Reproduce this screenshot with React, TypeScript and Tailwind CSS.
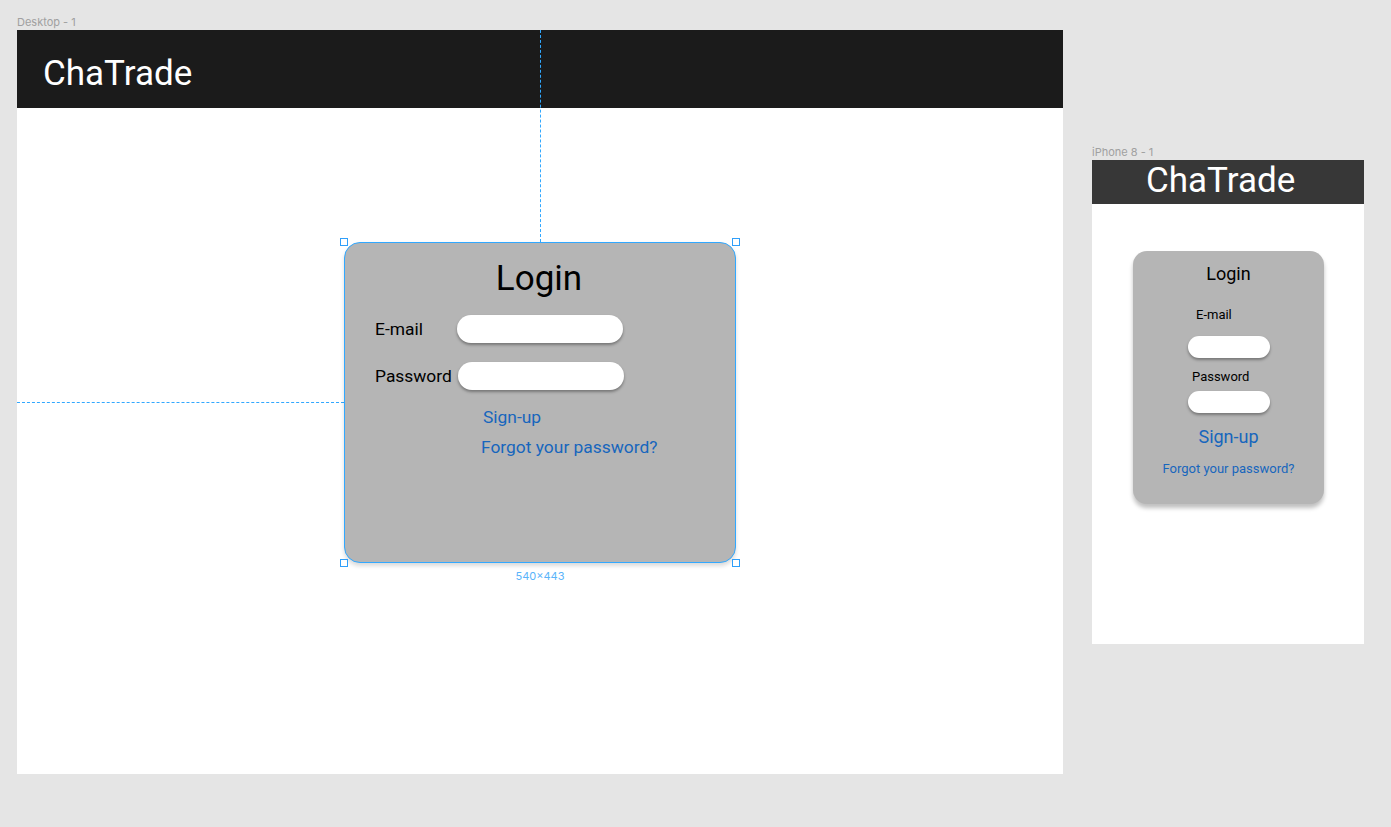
import React from "react"

const roboto = { fontFamily: "Roboto, 'Liberation Sans', sans-serif" }
const inter = { fontFamily: "Inter, 'Liberation Sans', sans-serif" }

function Handle({ className }: { className: string }) {
  return <div className={`absolute w-[8px] h-[8px] bg-white border border-[#2f9ffa] ${className}`} />
}

function PillInput({ className }: { className: string }) {
  return <div className={`bg-white rounded-full shadow-[0_2px_3px_rgba(0,0,0,0.35)] ${className}`} />
}

function DesktopFrame() {
  return (
    <div className="absolute left-[17px] top-[30px] w-[1046px] h-[744px] bg-white" style={roboto}>
      <div className="h-[78px] bg-[#1b1b1b] flex items-center pl-[26px] pt-[8px]">
        <span className="text-white text-[35px] leading-[41px]">ChaTrade</span>
      </div>

      <div className="relative pt-[134px] pl-[327px]">
        {/* guides */}
        <div className="absolute left-[523px] top-[-78px] h-[212px] border-l border-dashed border-[#31a8ff]" />
        <div className="absolute left-0 top-[294px] w-[327px] border-t border-dashed border-[#31a8ff]" />

        <div className="relative w-[392px] h-[321px]">
          <div className="w-full h-full rounded-[16px] bg-[#b5b5b5] border-[1.5px] border-[#31a8ff] shadow-[0_3px_4px_rgba(0,0,0,0.15)] pt-[15px] pl-[30px]">
            <h1 className="text-center text-[35px] leading-[42px] text-black pr-[32px]">Login</h1>
            <div className="flex items-center h-[28px] mt-[15px]">
              <span className="w-[82px] text-[17.4px] leading-[21px] text-black">E-mail</span>
              <PillInput className="w-[166px] h-[28px]" />
            </div>
            <div className="flex items-center h-[28px] mt-[19px]">
              <span className="w-[82px] text-[17.4px] leading-[21px] text-black">Password</span>
              <PillInput className="w-[166px] h-[28px] ml-px" />
            </div>
            <div className="ml-[108px] mt-[17px] text-[17.4px] leading-[21px] text-[#1766bd]">Sign-up</div>
            <div className="ml-[106px] mt-[9px] text-[17.4px] leading-[21px] text-[#1766bd]">Forgot your password?</div>
          </div>
          <Handle className="-left-[4px] -top-[4px]" />
          <Handle className="-right-[4px] -top-[4px]" />
          <Handle className="-left-[4px] -bottom-[4px]" />
          <Handle className="-right-[4px] -bottom-[4px]" />
          <div
            className="absolute left-0 right-0 -bottom-[20px] text-center text-[11px] leading-[13px] text-[#5ab4fa]"
            style={inter}
          >
            540×443
          </div>
        </div>
      </div>
    </div>
  )
}

function MobileFrame() {
  return (
    <div className="absolute left-[1092px] top-[160px] w-[272px] h-[484px] bg-white" style={roboto}>
      <div className="h-[44px] bg-[#373737] pl-[54px]">
        <span className="text-white text-[35px] leading-[41px]">ChaTrade</span>
      </div>
      <div className="pt-[47px] pl-[41px]">
        <div className="w-[191px] h-[253px] rounded-[14px] bg-[#b5b5b5] shadow-[0_4px_4px_rgba(0,0,0,0.25)] pt-[12px] flex flex-col">
          <div className="text-center text-[18px] leading-[21px] text-black">Login</div>
          <div className="ml-[63px] mt-[23px] text-[13px] leading-[15px] text-black">E-mail</div>
          <PillInput className="self-center w-[82px] h-[22px] mt-[14px]" />
          <div className="ml-[59px] mt-[11px] text-[13px] leading-[15px] text-black">Password</div>
          <PillInput className="self-center w-[82px] h-[22px] mt-[7px]" />
          <div className="text-center mt-[13px] text-[18px] leading-[21px] text-[#1766bd]">Sign-up</div>
          <div className="text-center mt-[14px] text-[13px] leading-[15px] text-[#1766bd]">Forgot your password?</div>
        </div>
      </div>
    </div>
  )
}

export default function App() {
  return (
    <div className="relative w-[1391px] h-[827px] bg-[#e5e5e5] overflow-hidden">
      <div className="absolute left-[17px] top-[15px] text-[11px] leading-[14px] text-[#a0a0a0]" style={inter}>
        Desktop - 1
      </div>
      <DesktopFrame />
      <div className="absolute left-[1092px] top-[145px] text-[11px] leading-[14px] text-[#a0a0a0]" style={inter}>
        iPhone 8 - 1
      </div>
      <MobileFrame />
    </div>
  )
}
